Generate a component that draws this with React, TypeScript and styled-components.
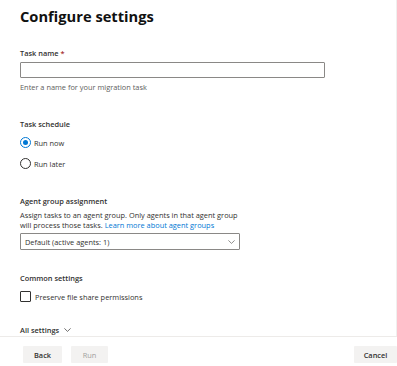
import React from "react";
import styled, { createGlobalStyle } from "styled-components";

const Global = createGlobalStyle`
  html, body { margin: 0; padding: 0; background: #ffffff; }
  body { font-family: "Segoe UI", "Open Sans", sans-serif; color: #323130; }
  * { box-sizing: border-box; }
`;

const FS = "7.4px";

const Page = styled.div`
  width: 397px;
  height: 366px;
  display: flex;
  flex-direction: column;
  overflow: hidden;
`;

const Content = styled.div`
  flex: 1;
  padding: 6px 0 0 20px;
  border-right: 1px solid #f0efee;
  overflow: hidden;
`;

const Title = styled.h1`
  margin: 0;
  font-size: 14.7px;
  line-height: 20px;
  font-weight: 700;
  color: #111111;
`;

const Section = styled.div<{ $mt: number }>`
  margin-top: ${(p) => p.$mt}px;
  display: flex;
  flex-direction: column;
  align-items: flex-start;
`;

const Label = styled.div`
  font-size: ${FS};
  line-height: 10px;
  font-weight: 600;
  color: #323130;
`;

const Required = styled.span`
  color: #a4262c;
  margin-left: 2px;
`;

const TextInput = styled.input`
  margin-top: 4px;
  width: 305px;
  height: 16px;
  border: 1px solid #8a8886;
  border-radius: 1px;
  background: #fff;
  padding: 0 4px;
  font: inherit;
  font-size: ${FS};
  outline: none;
`;

const Helper = styled.div`
  margin-top: 4px;
  font-size: ${FS};
  line-height: 10px;
  color: #605e5c;
`;

const RadioGroup = styled.div`
  margin-top: 8px;
  display: flex;
  flex-direction: column;
  gap: 10px;
`;

const ChoiceRow = styled.label`
  display: flex;
  align-items: center;
  gap: 3px;
  height: 11px;
  font-size: ${FS};
  line-height: 10px;
  color: #323130;
`;

const RadioCircle = styled.span<{ $checked?: boolean }>`
  width: 11px;
  height: 11px;
  border-radius: 50%;
  border: 1px solid ${(p) => (p.$checked ? "#0078d4" : "#323130")};
  display: flex;
  align-items: center;
  justify-content: center;
  flex: none;
  &::after {
    content: "";
    width: 5px;
    height: 5px;
    border-radius: 50%;
    background: ${(p) => (p.$checked ? "#0078d4" : "transparent")};
  }
`;

const CheckBox = styled.span`
  width: 11px;
  height: 11px;
  border: 1px solid #323130;
  border-radius: 1px;
  flex: none;
  margin-right: 1px;
`;

const Description = styled.div`
  margin-top: 4px;
  width: 221px;
  font-size: ${FS};
  line-height: 10.3px;
  color: #323130;
`;

const Link = styled.a`
  color: #0078d4;
  text-decoration: none;
`;

const Dropdown = styled.div`
  margin-top: 2.5px;
  width: 220px;
  height: 17px;
  border: 1px solid #8a8886;
  border-radius: 1px;
  display: flex;
  align-items: center;
  justify-content: space-between;
  padding: 0 4px 0 4px;
  font-size: ${FS};
  color: #323130;
`;

const Toggle = styled.div`
  display: flex;
  align-items: center;
  gap: 5px;
  font-size: ${FS};
  line-height: 10px;
  font-weight: 600;
  color: #323130;
`;

const Footer = styled.div`
  height: 30px;
  border-top: 1px solid #edebe9;
  padding: 9px 0 0 23px;
  display: flex;
  justify-content: space-between;
  align-items: flex-start;
`;

const ButtonGroup = styled.div`
  display: flex;
  gap: 9px;
`;

const Button = styled.button<{ $w: number }>`
  width: ${(p) => p.$w}px;
  height: 17px;
  border: none;
  border-radius: 1px;
  background: #f3f2f1;
  font-family: inherit;
  font-size: ${FS};
  font-weight: 600;
  color: #323130;
  padding: 0;
  &:disabled {
    color: #a19f9d;
    font-weight: 400;
  }
`;

const Chevron = ({ color }: { color: string }) => (
  <svg width="7" height="4" viewBox="0 0 7 4">
    <polyline points="0.4,0.4 3.5,3.4 6.6,0.4" fill="none" stroke={color} strokeWidth="0.7" />
  </svg>
);

export default function App() {
  return (
    <>
      <Global />
      <Page>
        <Content>
          <Title>Configure settings</Title>
          <Section $mt={22}>
            <Label>
              Task name<Required>*</Required>
            </Label>
            <TextInput />
            <Helper>Enter a name for your migration task</Helper>
          </Section>
          <Section $mt={27}>
            <Label>Task schedule</Label>
            <RadioGroup>
              <ChoiceRow>
                <RadioCircle $checked />
                Run now
              </ChoiceRow>
              <ChoiceRow>
                <RadioCircle />
                Run later
              </ChoiceRow>
            </RadioGroup>
          </Section>
          <Section $mt={27}>
            <Label>Agent group assignment</Label>
            <Description>
              Assign tasks to an agent group. Only agents in that agent group will process those tasks.{" "}
              <Link href="#">Learn more about agent groups</Link>
            </Description>
            <Dropdown>
              <span>Default (active agents: 1)</span>
              <Chevron color="#605e5c" />
            </Dropdown>
          </Section>
          <Section $mt={23}>
            <Label>Common settings</Label>
            <RadioGroup>
              <ChoiceRow>
                <CheckBox />
                Preserve file share permissions
              </ChoiceRow>
            </RadioGroup>
          </Section>
          <Section $mt={23}>
            <Toggle>
              All settings
              <Chevron color="#323130" />
            </Toggle>
          </Section>
        </Content>
        <Footer>
          <ButtonGroup>
            <Button $w={39}>Back</Button>
            <Button $w={37} disabled>
              Run
            </Button>
          </ButtonGroup>
          <Button $w={43}>Cancel</Button>
        </Footer>
      </Page>
    </>
  );
}
